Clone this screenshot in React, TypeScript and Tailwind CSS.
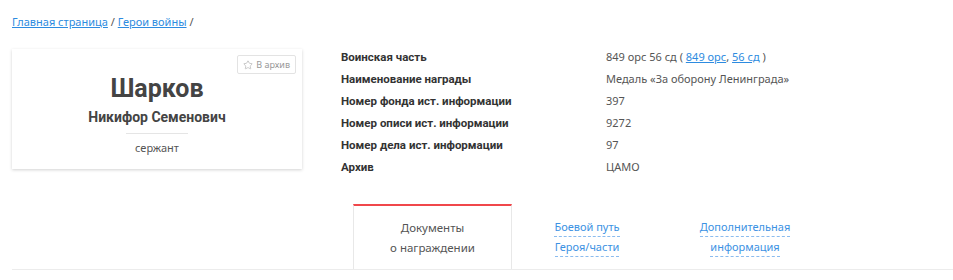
import { Star } from 'lucide-react'

const ROWS: { label: string; value: React.ReactNode }[] = [
  {
    label: 'Воинская часть',
    value: (
      <>
        849 орс 56 сд ({' '}
        <a className="text-[#2d8be0] underline">849 орс</a>,{' '}
        <a className="text-[#2d8be0] underline">56 сд</a> )
      </>
    ),
  },
  { label: 'Наименование награды', value: 'Медаль «За оборону Ленинграда»' },
  { label: 'Номер фонда ист. информации', value: '397' },
  { label: 'Номер описи ист. информации', value: '9272' },
  { label: 'Номер дела ист. информации', value: '97' },
  { label: 'Архив', value: 'ЦАМО' },
]

function Tab({ lines, active, width }: { lines: string[]; active?: boolean; width: string }) {
  if (active) {
    return (
      <div className={`${width} h-[65px] -mb-px bg-white border-x border-[#e8e8e8] border-t-2 border-t-[#f0474b] flex flex-col items-center justify-center text-[11.5px] leading-[20px] text-[#555]`}>
        {lines.map((l) => (
          <span key={l}>{l}</span>
        ))}
      </div>
    )
  }
  return (
    <div className={`${width} h-[65px] flex flex-col items-center justify-center text-[11px] leading-[20px] text-[#3d92e3]`}>
      {lines.map((l) => (
        <span key={l} className="border-b border-dashed border-[#8bbcef] leading-[19px]">
          {l}
        </span>
      ))}
    </div>
  )
}

export default function App() {
  return (
    <div className="w-[953px] h-[280px] bg-white font-['Noto_Sans',sans-serif] overflow-hidden">
      {/* Breadcrumbs */}
      <div className="pl-3 pt-[15px] text-[11px] leading-[14px] text-[#555]">
        <a className="text-[#2d8be0] underline">Главная страница</a> /{' '}
        <a className="text-[#2d8be0] underline">Герои войны</a> /
      </div>

      <div className="flex pl-3 pt-[20px]">
        {/* Hero card */}
        <div className="relative w-[290px] h-[120px] bg-white shadow-[0_1px_3px_rgba(0,0,0,0.18)] flex flex-col items-center pt-[24px]">
          <button className="absolute top-[6px] right-[6px] h-[19px] px-[5px] flex items-center gap-[3px] border border-[#e3e3e3] rounded-[2px] text-[9px] text-[#999]">
            <Star size={10} strokeWidth={1.5} className="text-[#aaa]" />
            В архив
          </button>
          <div className="font-['Roboto',sans-serif] text-[25px] leading-[32px] font-bold text-[#444]">Шарков</div>
          <div className="font-['Roboto',sans-serif] text-[14px] leading-[20px] font-bold text-[#444] mt-[2px]">
            Никифор Семенович
          </div>
          <div className="w-[62px] h-px bg-[#e5e5e5] mt-[6px]" />
          <div className="text-[11px] leading-[16px] text-[#555] mt-[6px]">сержант</div>
        </div>

        {/* Info */}
        <div className="ml-[39px] -mt-[3px]">
          {ROWS.map((r) => (
            <div key={r.label} className="flex h-[22px] items-baseline leading-[22px]">
              <div className="w-[265px] font-['Roboto',sans-serif] text-[11.5px] font-bold text-[#333]">{r.label}</div>
              <div className="text-[11px] text-[#555]">{r.value}</div>
            </div>
          ))}
        </div>
      </div>

      {/* Tabs */}
      <div className="ml-3 mt-[26px] flex pl-[341px] border-b border-[#ececec]">
        <Tab active width="w-[159px]" lines={['Документы', 'о награждении']} />
        <Tab width="w-[150px]" lines={['Боевой путь', 'Героя/части']} />
        <Tab width="w-[166px]" lines={['Дополнительная', 'информация']} />
      </div>
    </div>
  )
}
